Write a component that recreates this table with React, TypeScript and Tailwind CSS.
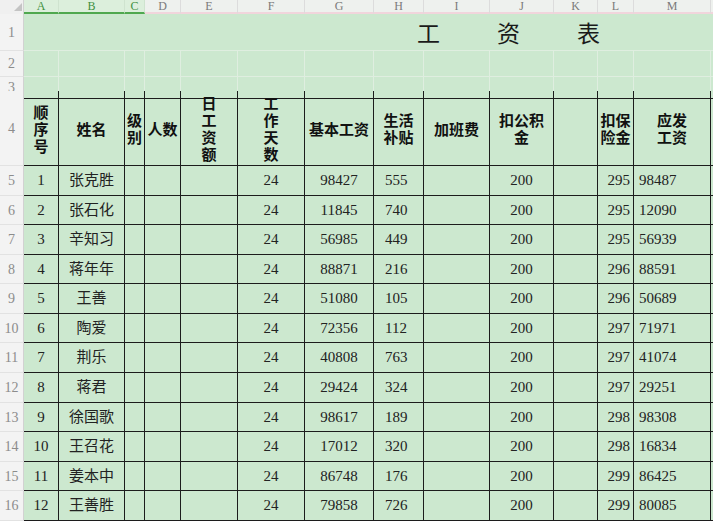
import * as React from "react";

const GRID =
  "grid grid-cols-[24px_35px_66px_20px_36px_57px_67px_69px_50px_66px_64px_44px_36px_77px_2px]";
const LETTERS = ["A", "B", "C", "D", "E", "F", "G", "H", "I", "J", "K", "L", "M"];
const SERIF = "font-['Liberation_Serif','Noto_Sans_CJK_SC',serif]";
const HEI = "font-['Noto_Sans_CJK_SC',sans-serif]";

const ROW_HEIGHTS = [
  "h-[30px]", "h-[29px]", "h-[30px]", "h-[29px]", "h-[30px]", "h-[29px]",
  "h-[30px]", "h-[30px]", "h-[29px]", "h-[30px]", "h-[29px]", "h-[30px]",
];

// name, 基本工资, 生活补贴, 扣保险金, 应发工资
const DATA: [string, string, string, string, string][] = [
  ["张克胜", "98427", "555", "295", "98487"],
  ["张石化", "11845", "740", "295", "12090"],
  ["辛知习", "56985", "449", "295", "56939"],
  ["蒋年年", "88871", "216", "296", "88591"],
  ["王善", "51080", "105", "296", "50689"],
  ["陶爱", "72356", "112", "297", "71971"],
  ["荆乐", "40808", "763", "297", "41074"],
  ["蒋君", "29424", "324", "297", "29251"],
  ["徐国歌", "98617", "189", "298", "98308"],
  ["王召花", "17012", "320", "298", "16834"],
  ["姜本中", "86748", "176", "299", "86425"],
  ["王善胜", "79858", "726", "299", "80085"],
];

const HEADERS: string[][] = [
  ["顺", "序", "号"],
  ["姓名"],
  ["级", "别"],
  ["人数"],
  ["日", "工", "资", "额"],
  ["工", "作", "天", "数"],
  ["基本工资"],
  ["生活", "补贴"],
  ["加班费"],
  ["扣公积", "金"],
  [],
  ["扣保", "险金"],
  ["应发", "工资"],
];

function RowHead({ n }: { n: number }) {
  return (
    <div
      className={`flex items-center justify-center border-r border-b border-r-[#d2d2d2] border-b-[#e2e2e2] bg-[#f3f3f3] text-[14px] text-[#8c8c8c] ${SERIF}`}
    >
      {n}
    </div>
  );
}

function Cell({
  children,
  align = "center",
}: {
  children?: React.ReactNode;
  align?: "center" | "h" | "right" | "m";
}) {
  const pos =
    align === "center"
      ? "justify-center"
      : align === "right"
        ? "justify-end pr-[3px]"
        : align === "h"
          ? "justify-start pl-[11px]"
          : "justify-start pl-[5px]";
  return (
    <div
      className={`flex items-center border-r border-b border-[#1c1c1c] text-[15px] text-[#222] ${pos}`}
    >
      {children}
    </div>
  );
}

export default function App() {
  return (
    <div className="h-[521px] w-[713px] overflow-hidden bg-[#cce8cf]">
      {/* column letters */}
      <div className={`${GRID} h-[14px]`}>
        <div className="relative border-r border-[#d2d2d2] bg-[#f0f0f0]">
          <svg className="absolute left-[14px] top-[3px]" width="8" height="8" viewBox="0 0 8 8">
            <polygon points="8,0 8,8 0,8" fill="#c4c4c4" />
          </svg>
        </div>
        {LETTERS.map((l, i) =>
          i < 3 ? (
            <div
              key={l}
              className={`flex items-center justify-center border-r border-b-2 border-r-[#cfe3cf] border-b-[#4fa84f] bg-[#dcefdc] text-[12px] leading-none text-[#3f8f3f] ${SERIF}`}
            >
              {l}
            </div>
          ) : (
            <div
              key={l}
              className={`flex items-center justify-center border-r border-b-2 border-r-[#dcdcdc] border-b-[#f1d5dc] bg-[#eef1ee] text-[12px] leading-none text-[#7a7a7a] ${SERIF}`}
            >
              {l}
            </div>
          ),
        )}
        <div className="border-b-2 border-[#f1d5dc] bg-[#eef1ee]" />
      </div>

      {/* row 1 title */}
      <div className={`${GRID} h-[37px]`}>
        <RowHead n={1} />
        <div className="col-span-14 flex items-center gap-[57px] border-b border-[#dfeee0] pl-[393px] pt-[5px]">
          {["工", "资", "表"].map((c) => (
            <span key={c} className={`text-[23px] leading-none text-[#1a1a1a] ${SERIF}`}>
              {c}
            </span>
          ))}
        </div>
      </div>

      {/* row 2 */}
      <div className={`${GRID} h-[26px]`}>
        <RowHead n={2} />
        {LETTERS.map((l) => (
          <div key={l} className="border-r border-b border-[#dfeee0]" />
        ))}
        <div className="border-b border-[#dfeee0]" />
      </div>

      {/* row 3 */}
      <div className={`${GRID} h-[14px]`}>
        <RowHead n={3} />
        {LETTERS.map((l) => (
          <div key={l} className="border-r border-b border-r-[#dfeee0] border-b-[#1c1c1c]" />
        ))}
        <div className="border-b border-[#1c1c1c]" />
      </div>

      {/* row 4 headers */}
      <div className={`${GRID} h-[75px]`}>
        <RowHead n={4} />
        {HEADERS.map((lines, i) => (
          <div
            key={i}
            className={`flex flex-col items-center justify-center border-r border-b border-[#1c1c1c] text-[15px] font-bold leading-[17px] text-[#111] ${HEI}`}
          >
            {lines.map((t, j) => (
              <span key={j} className="block whitespace-nowrap">
                {t}
              </span>
            ))}
          </div>
        ))}
        <div className="border-b border-[#1c1c1c]" />
      </div>

      {/* data rows */}
      {DATA.map((r, i) => (
        <div key={i} className={`${GRID} ${ROW_HEIGHTS[i]} ${SERIF}`}>
          <RowHead n={i + 5} />
          <Cell>{i + 1}</Cell>
          <Cell>{r[0]}</Cell>
          <Cell />
          <Cell />
          <Cell />
          <Cell>24</Cell>
          <Cell>{r[1]}</Cell>
          <Cell align="h">{r[2]}</Cell>
          <Cell />
          <Cell>200</Cell>
          <Cell />
          <Cell align="right">{r[3]}</Cell>
          <Cell align="m">{r[4]}</Cell>
          <div className="border-b border-[#1c1c1c]" />
        </div>
      ))}
    </div>
  );
}
